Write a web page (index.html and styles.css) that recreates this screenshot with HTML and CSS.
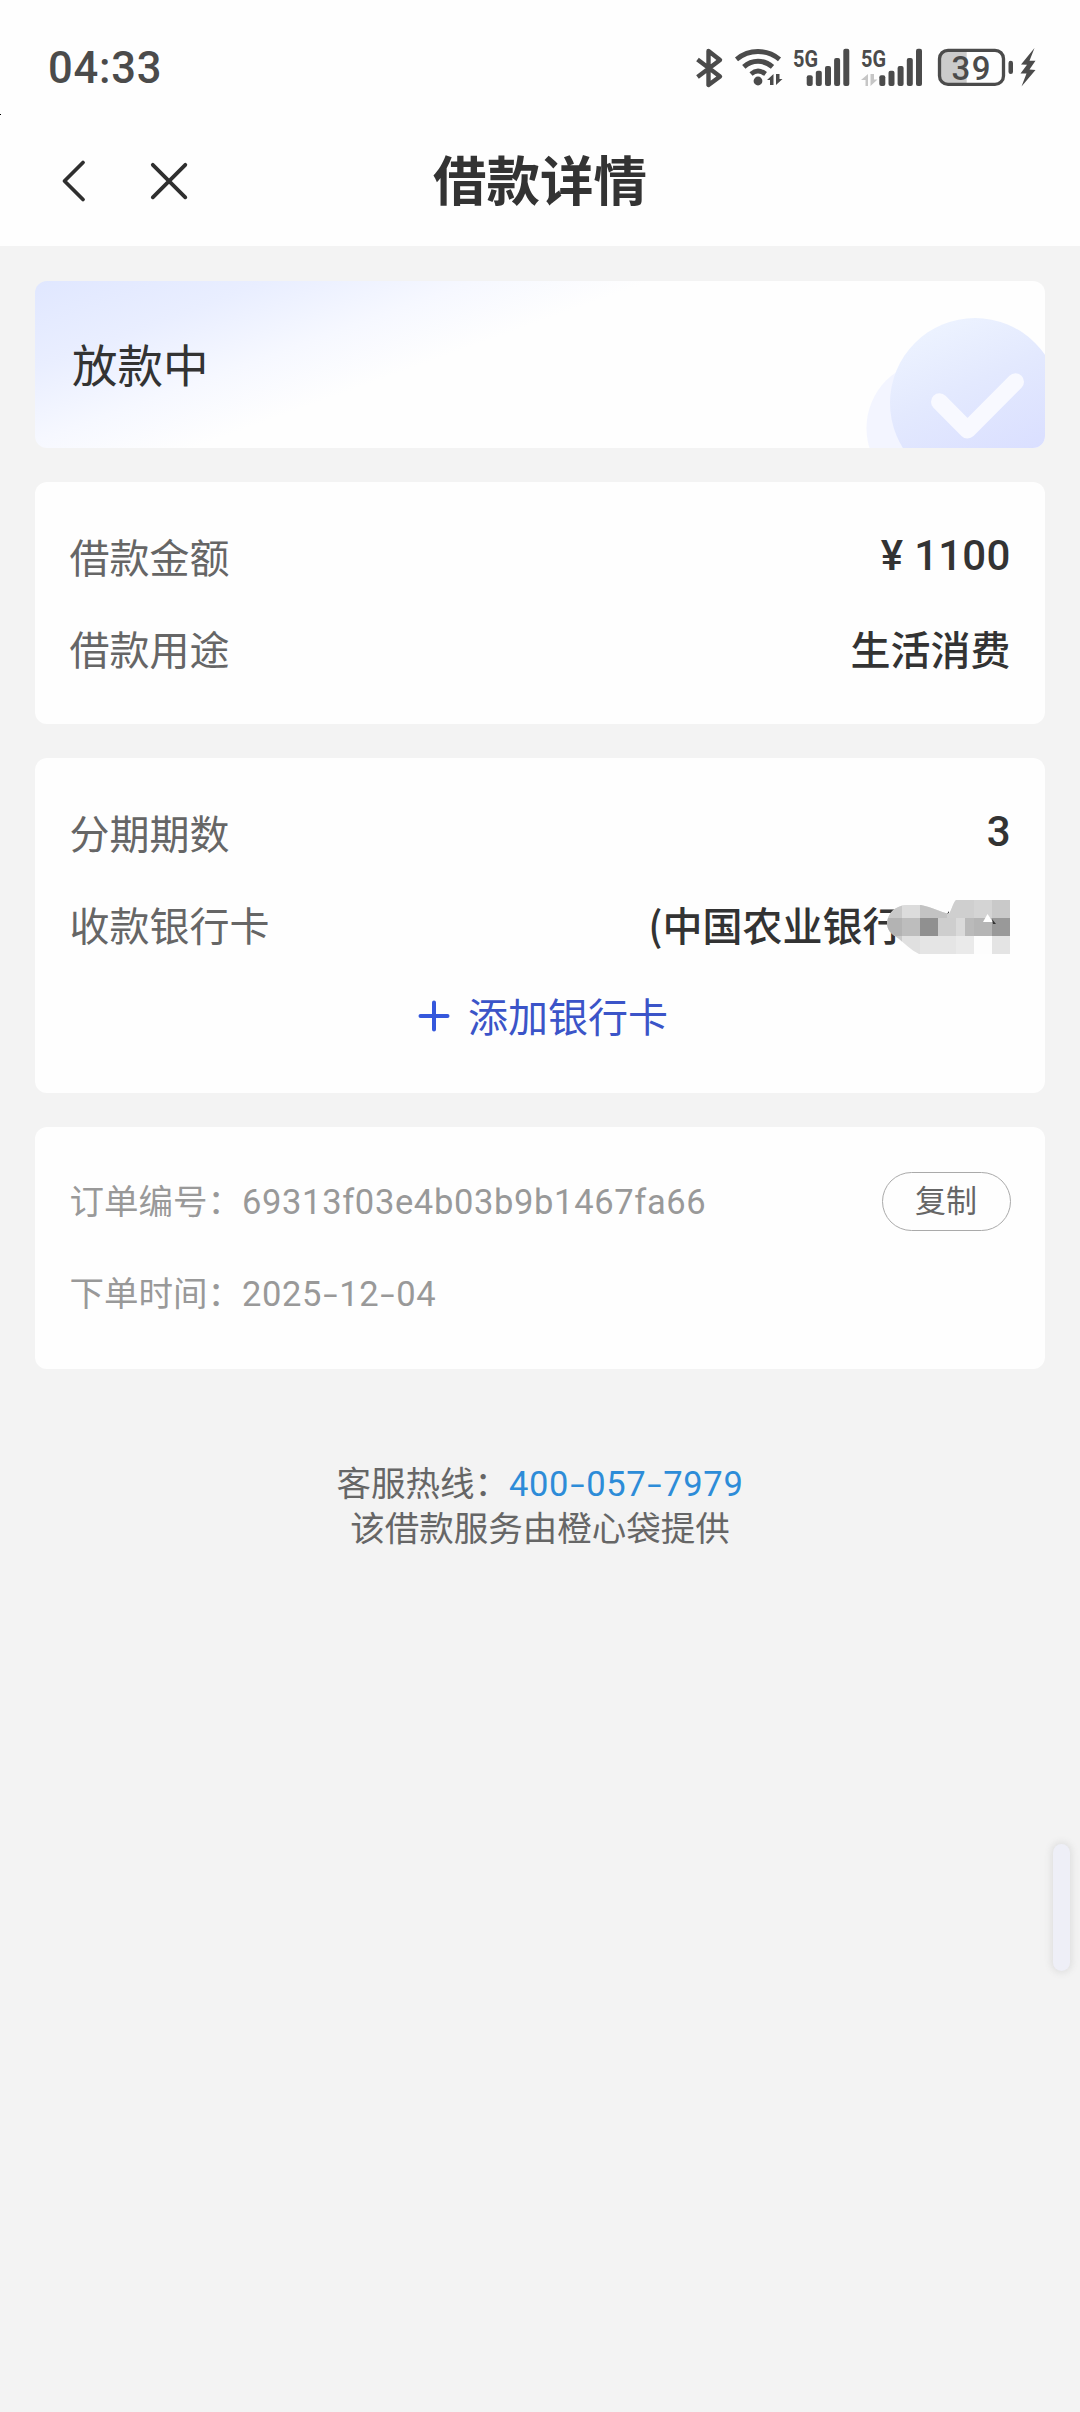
FILE: index.html
```html
<!DOCTYPE html>
<html lang="zh-CN">
<head>
<meta charset="utf-8">
<title>借款详情</title>
<link rel="stylesheet" href="styles.css">
</head>
<body>
<div class="screen">
  <header class="header">
    <div class="status">
      <span class="clock">04:33</span>
      <div class="status-icons">
        <svg width="26" height="40" viewBox="696 48 26 40"><path d="M697.5 59.5 720 76.5 708.5 85V51L720 60 697.5 77" fill="none" stroke="#4b4b4b" stroke-width="4.4" stroke-linejoin="round"/></svg>
        <svg class="wifi" width="50" height="40" viewBox="734 48 50 40"><g fill="none" stroke="#4b4b4b" stroke-width="4.8"><path d="M736.5 59.3Q746 51.5 758 51.5T779.5 59.3"/><path d="M743.8 66.8Q750 61.3 758 61.3T772.5 66.8" stroke-width="5"/><path d="M751 74Q754.5 71 758 71T765.5 74"/></g><circle cx="758" cy="81" r="4.4" fill="#4b4b4b"/><path d="M767 80 773.5 74V85H770V80ZM776 74V85L782.5 79H779.5V74Z" fill="#4b4b4b"/></svg>
        <svg class="signal" width="58" height="40" viewBox="792 48 58 40"><text x="793" y="66.5" textLength="25" lengthAdjust="spacingAndGlyphs" class="net">5G</text><g fill="#4b4b4b"><rect x="806.7" y="75.3" width="6" height="10.7" rx="2"/><rect x="815.8" y="70.7" width="6" height="15.3" rx="2"/><rect x="825" y="66" width="6" height="20" rx="2"/><rect x="834.1" y="58" width="6" height="28" rx="2"/><rect x="843.3" y="48.7" width="6" height="37.3" rx="2"/></g></svg>
        <svg class="signal-2" width="62" height="40" viewBox="860 48 62 40"><text x="861" y="66.5" textLength="25" lengthAdjust="spacingAndGlyphs" class="net">5G</text><path d="M861 80 868 74V86H865.500V80ZM870.500 74V86L877.500 79.500H874V74Z" fill="#c6c6c6"/><g fill="#4b4b4b"><rect x="879.3" y="75.3" width="6" height="10.7" rx="2"/><rect x="888.5" y="70.7" width="6" height="15.3" rx="2"/><rect x="897.6" y="66" width="6" height="20" rx="2"/><rect x="906.8" y="58" width="6" height="28" rx="2"/><rect x="916" y="48.7" width="6" height="37.3" rx="2"/></g></svg>
        <svg class="battery" width="78" height="40" viewBox="936 48 78 40"><path d="M966.700 50.300H948.500a9 9 0 0 0-9 9V75.400a9 9 0 0 0 9 9H966.700Z" fill="#cbcbcb"/><rect x="939.5" y="50.300" width="64" height="34.100" rx="8.500" fill="none" stroke="#4b4b4b" stroke-width="3.300"/><rect x="1008.5" y="60.7" width="4.500" height="13.300" rx="2.200" fill="#4b4b4b"/><text x="951.5" y="79.500" textLength="39" class="charge">39</text></svg>
        <svg class="bolt" width="17" height="40" viewBox="1020 48 17 40"><path d="M1034.500 48 1021 64.500 1027 64.700 1020.500 73.500 1026.500 73.500 1021.500 86.500 1035.500 70 1029.500 69.500 1035.500 60.700H1029.500Z" fill="#4b4b4b"/></svg>
      </div>
    </div>
    <div class="nav">
      <div class="nav-actions">
        <svg width="26" height="44" viewBox="60 159 26 44"><path d="M83 162.500 64.500 181 83 199.500" class="nav-stroke"/></svg>
        <svg width="40" height="40" viewBox="149 161 40 40"><path d="M152.800 164.800 185.300 197.300M185.300 164.800 152.800 197.300" class="nav-stroke"/></svg>
      </div>
      <h1 class="title">借款详情</h1>
    </div>
    <i class="edge-mark"></i>
  </header>

  <main class="content">
    <section class="card state">
      <span class="state-text">放款中</span>
      <svg class="state-art" width="179" height="130" viewBox="866 318 179 130">
        <defs>
          <linearGradient id="disc" x1="0.2" y1="0.05" x2="0.6" y2="0.9"><stop offset="0" stop-color="#edf3ff"/><stop offset="0.45" stop-color="#e3e9fe"/><stop offset="1" stop-color="#dadfff"/></linearGradient>
        </defs>
        <circle cx="934" cy="428" r="67.500" fill="#f3f5ff"/>
        <circle cx="975" cy="403" r="85" fill="url(#disc)"/>
        <path d="M939.500 401.800 967.500 430 1015.500 381.800" fill="none" stroke="#f8f9ff" stroke-width="17" stroke-linecap="round" stroke-linejoin="round"/>
      </svg>
    </section>

    <section class="card">
      <div class="row"><span class="label">借款金额</span><span class="value amount digits"><span>¥</span><span>1100</span></span></div>
      <div class="row"><span class="label">借款用途</span><span class="value">生活消费</span></div>
    </section>

    <section class="card">
      <div class="row"><span class="label">分期期数</span><span class="value digits">3</span></div>
      <div class="row">
        <span class="label">收款银行卡</span>
        <span class="value bank">(中国农业银行
          <svg class="mask" width="125" height="56" viewBox="884 899 125 56">
            <clipPath id="blob"><path d="M885 923C886 912 894 906 904 905H919C930 907 938 912 947 914C950 909 951 903 954 900H1008V954H917C909 950 903 944 896 938C889 934 885 930 885 923Z"/></clipPath>
            <g clip-path="url(#blob)" shape-rendering="crispEdges">
              <path fill="#e0e0e0" d="M882 900H1008V954H882Z"/>
              <path fill="#c9c9c9" d="M882 900H900V918H882Z"/><path fill="#dcdcdc" d="M900 900H918V918H900Z"/><path fill="#c3c3c3" d="M918 900H945V918H918Z"/><path fill="#cfcfcf" d="M945 900H972V918H945Z"/><path fill="#d4d4d4" d="M972 900H990V918H972Z"/><path fill="#c9c9c9" d="M990 900H1008V918H990Z"/>
              <path fill="#b3b3b3" d="M882 918H900V936H882Z"/><path fill="#bdbdbd" d="M900 918H918V936H900Z"/><path fill="#909090" d="M918 918H936V936H918Z"/><path fill="#cecece" d="M936 918H954V936H936Z"/><path fill="#dadada" d="M954 918H963V936H954Z"/><path fill="#bababa" d="M963 918H972V936H963Z"/><path fill="#b5b5b5" d="M972 918H990V936H972Z"/><path fill="#999" d="M990 918H1008V936H990Z"/>
              <path fill="#cacaca" d="M882 936H900V954H882Z"/><path fill="#e5e5e5" d="M918 936H954V954H918Z"/><path fill="#eaeaea" d="M954 936H972V954H954Z"/><path fill="#fdfdfd" d="M972 936H990V954H972Z"/><path fill="#e4e4e4" d="M990 936H1008V954H990Z"/>
            </g>
            <path d="M985.500 914 991 922H981Z" fill="#fff"/><path d="M990 919 994 924H991ZM945 914 947 911V913Z" fill="#333"/>
          </svg>
        </span>
      </div>
      <div class="row add">
        <svg width="30" height="30" viewBox="0 0 30 30"><path d="M1.500 15H28.500M15 1.500V28.500" stroke="#3558dc" stroke-width="4" stroke-linecap="round"/></svg>
        <span>添加银行卡</span>
      </div>
    </section>

    <section class="card order">
      <div class="row"><span>订单编号：<span class="digits order-no">69313f03e4b03b9b1467fa66</span></span><button class="copy">复制</button></div>
      <div class="row"><span>下单时间：<span class="digits order-date">2025<i>-</i>12<i>-</i>04</span></span></div>
    </section>

    <footer class="footer">
      <p>客服热线：<a class="digits phone">400<i>-</i>057<i>-</i>7979</a></p>
      <p>该借款服务由橙心袋提供</p>
    </footer>
  </main>
  <div class="handle"></div>
</div>
</body>
</html>
```
FILE: styles.css
```css
* { box-sizing: border-box; }
body {
  margin: 0;
  background: #f3f3f3;
  color: #333;
  font-family: "Noto Sans CJK SC", sans-serif;
}
.screen {
  position: relative;
  width: 1080px;
  height: 2412px;
  overflow: hidden;
  background: #f3f3f3;
}
svg { display: block; flex: none; overflow: visible; }
.digits { font-family: Roboto, "Noto Sans CJK SC", sans-serif; font-weight: inherit; line-height: 1; }
.digits i {
  display: inline-block;
  width: 17px;
  text-align: center;
  font-style: normal;
  letter-spacing: 0;
  transform: scaleX(1.5);
}

.header { position: relative; height: 246px; background: #fefefe; }
.status {
  display: flex;
  justify-content: space-between;
  align-items: flex-start;
  height: 116px;
  padding: 48px 43px 0 48px;
}
.clock {
  padding-top: 1px;
  font: 500 43.500px/40px Roboto, sans-serif;
  letter-spacing: 0.800px;
  color: #4b4b4b;
}
.status-icons { display: flex; }
.wifi { margin-left: 12px; }
.signal { margin-left: 8px; }
.signal-2 { margin-left: 10px; }
.battery { margin-left: 14px; }
.bolt { margin-left: 6px; }
.net { font: 700 24.500px Roboto, sans-serif; fill: #4b4b4b; }
.charge { font: 500 33px Roboto, sans-serif; fill: #4b4b4b; }
.nav {
  display: grid;
  grid-template-columns: 1fr auto 1fr;
  align-items: center;
  height: 130px;
}
.nav-actions { display: flex; align-items: center; gap: 63px; padding-left: 60px; }
.nav-stroke { fill: none; stroke: #2f2f2f; stroke-width: 3.800px; stroke-linecap: round; stroke-linejoin: round; }
.title { margin: 0; padding-bottom: 6px; font-size: 53.500px; line-height: 80px; font-weight: 700; }
.edge-mark { position: absolute; left: 0; top: 114px; width: 1px; height: 1px; background: #000; }

.content { display: flex; flex-direction: column; gap: 34px; padding: 34.500px 35px 0; }
.card { padding: 30px 34.500px 28.500px; border-radius: 12px; background: #fefefe; }
.card:nth-child(2) { height: 242px; }
.state {
  position: relative;
  display: flex;
  align-items: center;
  height: 167.500px;
  padding: 0 0 2px 37px;
  overflow: hidden;
  background: linear-gradient(160deg, #e0e7ff 0%, #e9eeff 16%, #f6f8ff 30%, #fefefe 42%);
}
.state-text { font-size: 45.500px; line-height: 68px; }
.state-art { position: absolute; right: 0; bottom: 0; }
.row {
  display: flex;
  justify-content: space-between;
  align-items: center;
  height: 92px;
  padding-bottom: 5px;
  font-size: 40px;
  line-height: 60px;
}
.label { color: #666; }
.value { font-weight: 500; }
.value.digits { font-size: 42px; line-height: 42px; }
.amount { display: flex; gap: 11px; letter-spacing: 0.200px; }
.bank { position: relative; padding-right: 108px; }
.mask { position: absolute; right: 0; top: 5px; }
.add { justify-content: center; gap: 19px; padding: 0 0 7px 7px; color: #3b54c8; }
.add svg { margin-top: 3px; }
.order { height: 242px; }
.order .row { padding-bottom: 7px; font-size: 34.500px; color: #999; }
.order-no, .order-date, .phone { letter-spacing: 0.650px; }
.copy {
  width: 129px;
  height: 59px;
  margin-top: 5px;
  padding: 0 0 6px;
  border: 1px solid #aaa;
  border-radius: 30px;
  background: transparent;
  color: #666;
  font: 31px/50px "Noto Sans CJK SC", sans-serif;
}
.footer { padding-top: 56px; text-align: center; font-size: 34.500px; line-height: 45px; color: #666; }
.footer p { margin: 0; height: 45px; }
.phone { color: #2d8cd8; }
.handle {
  position: absolute;
  right: 10px;
  top: 1844px;
  width: 17px;
  height: 127px;
  border-radius: 9px;
  background: #eeeff7;
  box-shadow: 0 0 7px 2px #dedede;
}
```
